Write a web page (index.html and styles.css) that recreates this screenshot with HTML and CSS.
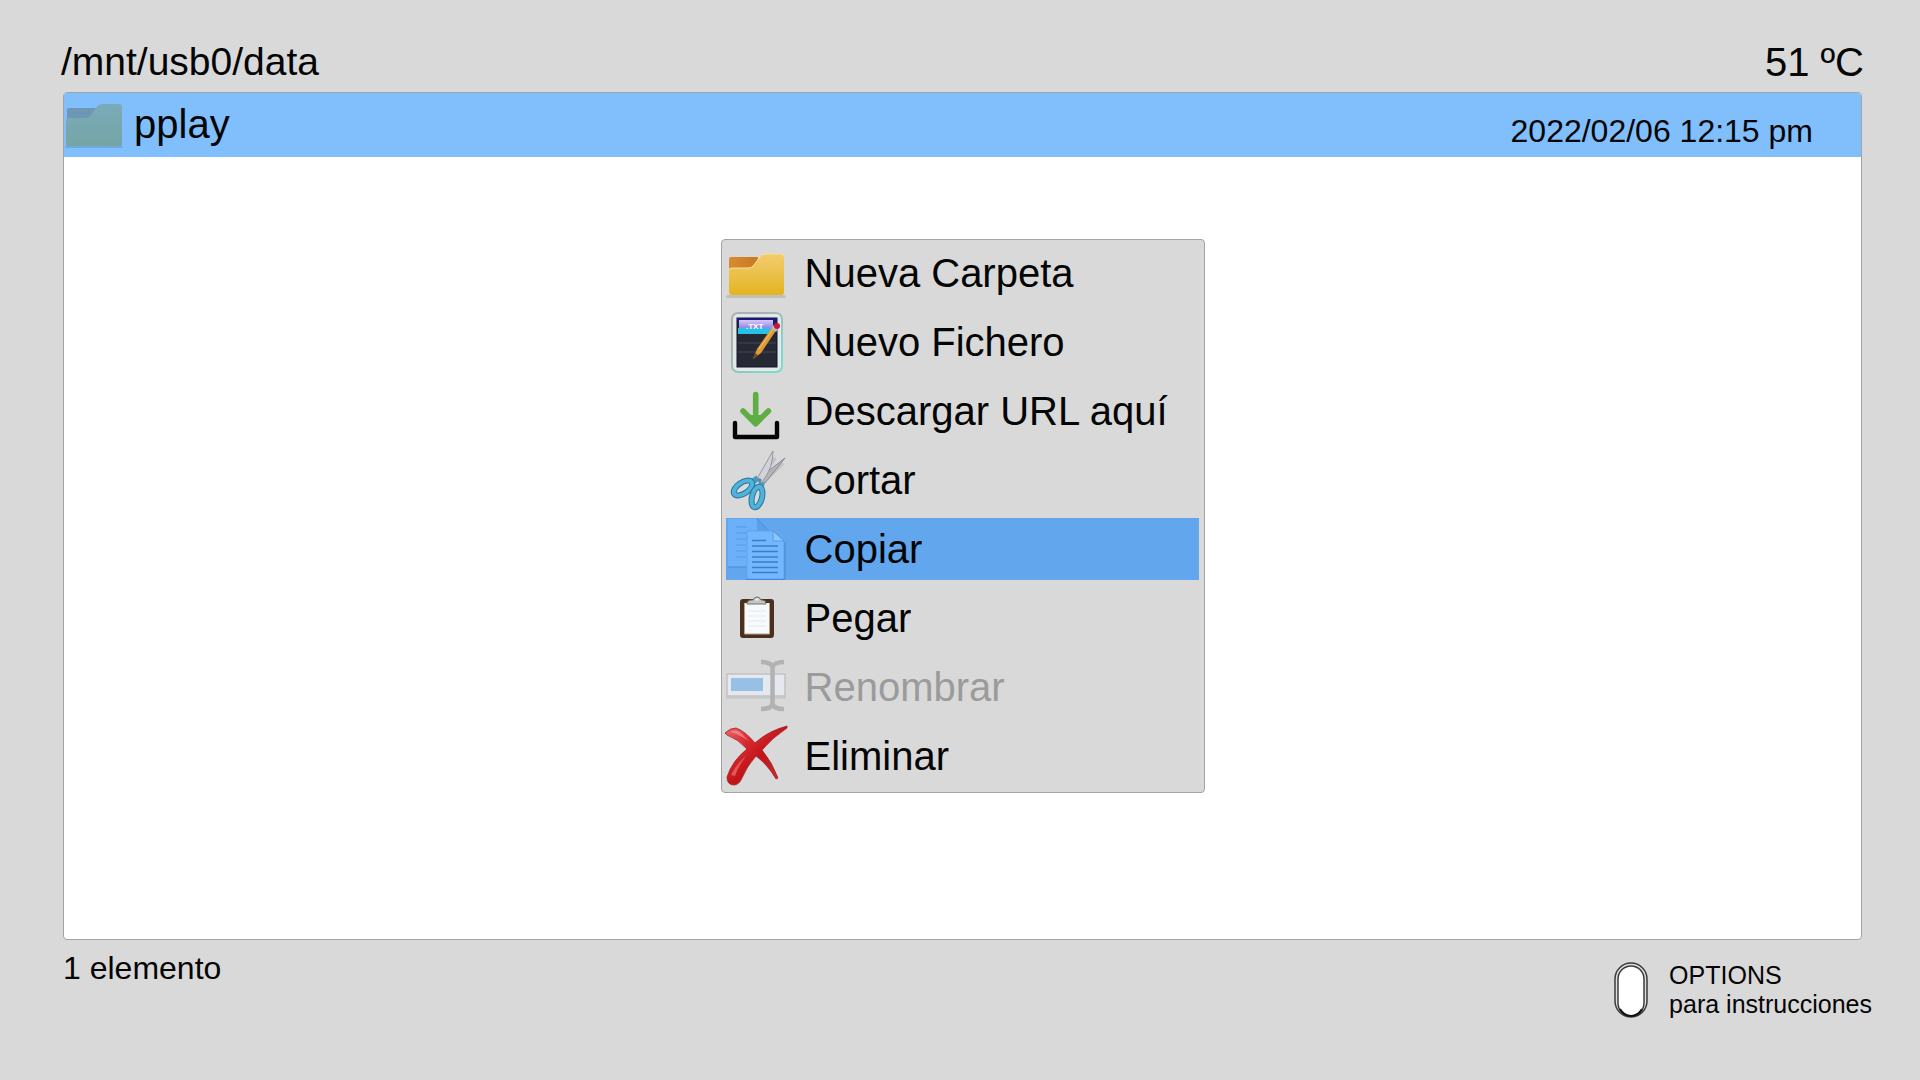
FILE: index.html
```
<!DOCTYPE html>
<html lang="es">
<head>
<meta charset="utf-8">
<title>/mnt/usb0/data</title>
<link rel="stylesheet" href="styles.css">
</head>
<body>
<header class="topbar">
  <h1 class="path">/mnt/usb0/data</h1>
  <span class="temp">51 ºC</span>
</header>

<main class="browser">
  <ul class="files">
    <li>
      <button type="button" class="file selected">
        <svg class="icon" viewBox="0 0 62 62" aria-hidden="true">
          <defs>
            <linearGradient id="dimFront" x1="0" y1="0" x2="0" y2="1"><stop offset="0" stop-color="#7aabb9"/><stop offset="1" stop-color="#75a5a5"/></linearGradient>
          </defs>
          <path d="M2 51h56l1 3H1z" fill="#70a9df"/>
          <path d="M3 16q0-2 2-2h27l-2 18H3z" fill="#6d97b5"/>
          <path d="M2 27q0-3 3-3h16q4 0 6-3l5-7q2-4 7-4h16q3 0 3 3v36q0 3-3 3H5q-3 0-3-3z" fill="url(#dimFront)"/>
        </svg>
        <span class="file-name">pplay</span>
        <span class="file-date">2022/02/06 12:15 pm</span>
      </button>
    </li>
  </ul>

  <nav class="menu" aria-label="Opciones">
    <button type="button" class="item">
      <svg class="icon" viewBox="0 0 62 62" aria-hidden="true">
        <defs>
          <linearGradient id="folderFront" x1="0" y1="0" x2="0" y2="1"><stop offset="0" stop-color="#f2cc6c"/><stop offset=".5" stop-color="#ebc04a"/><stop offset="1" stop-color="#e4b41f"/></linearGradient>
          <linearGradient id="folderBack" x1="0" y1="0" x2="1" y2="0"><stop offset="0" stop-color="#d98b34"/><stop offset="1" stop-color="#c87a20"/></linearGradient>
        </defs>
        <path d="M1 53h58l1 3H0z" fill="#c2c0bb"/>
        <path d="M3 17q0-2 2-2h27l-2 16H3z" fill="url(#folderBack)"/>
        <path d="M3 28q0-2 3-2h16q4 0 6-3l5-7q2-4 7-4h15q3 0 3 3v35q0 3-3 3H6q-3 0-3-3z" fill="url(#folderFront)"/>
        <path d="M3 28q0-2 3-2h16q4 0 6-3l5-7q2-4 7-4h15q3 0 3 3" fill="none" stroke="#f8df98"/>
      </svg>
      <span>Nueva Carpeta</span>
    </button>
    <button type="button" class="item">
      <svg class="icon" viewBox="0 0 62 62" aria-hidden="true">
        <defs>
          <linearGradient id="txtRim" x1="0" y1="0" x2="1" y2="1"><stop offset=".3" stop-color="#aab0b0"/><stop offset=".8" stop-color="#7fd8cc"/></linearGradient>
          <linearGradient id="txtHead" x1="0" y1="0" x2="0" y2="1"><stop offset="0" stop-color="#d5c8fa"/><stop offset="1" stop-color="#8d7ce4"/></linearGradient>
        </defs>
        <rect x="6" y="2" width="50" height="59" rx="6" fill="#e3e8e8" stroke="url(#txtRim)" stroke-width="2"/>
        <rect x="11" y="7" width="40" height="49" fill="#262933" stroke="#15152f"/>
        <rect x="11" y="7" width="40" height="4" fill="#1c177c"/>
        <rect x="13" y="9" width="34" height="9" fill="url(#txtHead)"/>
        <rect x="12" y="17" width="36" height="6" fill="#25c2e6"/>
        <path d="M12 32h38M12 41h38" stroke="#444956"/>
        <text x="20" y="18" class="txt-tag">.TXT</text>
        <path d="M27 48l4-10 16-23 4 3-16 24z" fill="#e09a35"/>
        <path d="M33 38L48 17" stroke="#f5c26a" stroke-width="1"/>
        <path d="M27 48l2-6 3 2z" fill="#6b4b25"/>
        <path d="M45 17l3-3 4 4-2 3z" fill="#b9b5c6"/>
        <circle cx="51" cy="15" r="3" fill="#cf1236"/>
      </svg>
      <span>Nuevo Fichero</span>
    </button>
    <button type="button" class="item">
      <svg class="icon" viewBox="0 0 62 62" aria-hidden="true">
        <path d="M9 43v14h42V43" fill="none" stroke="#050505" stroke-width="4.400" stroke-linejoin="round" stroke-linecap="round"/>
        <path d="M29.700 14.500V43M17 31l12.700 12.700L42.400 31" fill="none" stroke="#5fae43" stroke-width="5.600" stroke-linecap="round" stroke-linejoin="round"/>
        <path d="M22 35h15l-7 11z" fill="#5fae43"/>
      </svg>
      <span>Descargar URL aquí</span>
    </button>
    <button type="button" class="item">
      <svg class="icon" viewBox="0 0 62 62" aria-hidden="true">
        <path d="M36 34L57 14M33 31l16-22" stroke="#c4c4c4" stroke-width="4"/>
        <path d="M59 9L32 30l2 5 5-1z" fill="#b3b5bb" stroke="#777b84" stroke-width=".8"/>
        <path d="M47 2L32 28l3 6 4-5q8-12 8-27z" fill="#d2d3d8" stroke="#858891" stroke-width=".8"/>
        <path d="M32 29l-7 5M36 33l-2 8" stroke="#4a9cc4" stroke-width="6"/>
        <ellipse cx="17" cy="39" rx="10.500" ry="5.500" transform="rotate(-34 17 39)" fill="#d3dce0" stroke="#2c7398" stroke-width="6"/>
        <ellipse cx="17" cy="39" rx="10.500" ry="5.500" transform="rotate(-34 17 39)" fill="none" stroke="#4fb3dc" stroke-width="4"/>
        <ellipse cx="31" cy="48" rx="5" ry="10.500" transform="rotate(14 31 48)" fill="#d3dce0" stroke="#2c7398" stroke-width="6"/>
        <ellipse cx="31" cy="48" rx="5" ry="10.500" transform="rotate(14 31 48)" fill="none" stroke="#4fb3dc" stroke-width="4"/>
        <circle cx="34" cy="31" r="1.500" fill="#777"/>
      </svg>
      <span>Cortar</span>
    </button>
    <button type="button" class="item active">
      <svg class="icon" viewBox="0 0 62 62" aria-hidden="true">
        <path d="M2 1h29l11 12v36H2z" fill="#6bb0f8"/>
        <path d="M2 49h19M31 1l11 12" stroke="#4a8bd2" stroke-width="1.200"/>
        <path d="M31 1v12h11z" fill="#5b9fe8"/>
        <path d="M10 9h11M10 15h16M10 21h11M10 27h10M10 33h10M10 39h10" stroke="#579ae3" stroke-width="1.200"/>
        <path d="M21 13h26l11 10v38H21z" fill="#73b8ff" stroke="#5da3ef"/>
        <path d="M47 13v10h11z" fill="#8ac6ff" stroke="#4e92dc" stroke-width=".8"/>
        <path d="M26 22.500h14M26 28h26M26 33.500h26M26 39h26M26 44h26M26 49.500h26M26 54.500h26" stroke="#3c7dc8" stroke-width="1.500"/>
        <path d="M20 61.500h39V24" fill="none" stroke="#4488d2"/>
      </svg>
      <span>Copiar</span>
    </button>
    <button type="button" class="item">
      <svg class="icon" viewBox="0 0 62 62" aria-hidden="true">
        <rect x="16" y="14" width="30" height="35" rx="1" fill="#f9fafc" stroke="#4b3020" stroke-width="4"/>
        <path d="M18.500 16v31h25V16" fill="none" stroke="#b9a38f"/>
        <path d="M22 24h18M22 29h18M22 34h18M22 39h18" stroke="#e2e9f1"/>
        <path d="M21 17q0-4 5-4h1q1-3 4-3t4 3h1q4 0 4 4z" fill="#c3c6c3" stroke="#6e706b"/>
        <circle cx="31" cy="12.500" r="1.200" fill="#f3f3f3"/>
      </svg>
      <span>Pegar</span>
    </button>
    <button type="button" class="item" disabled>
      <svg class="icon" viewBox="0 0 62 62" aria-hidden="true">
        <rect x="0" y="38" width="60" height="5" fill="#cbcbcb"/>
        <rect x="1" y="18" width="58" height="22" fill="#e6e8f0" stroke="#c2c2c4" stroke-width="1.500"/>
        <rect x="5" y="22" width="32" height="13" fill="#98c0e4"/>
        <path d="M35 6q10 0 11.500 5Q48 6 58 6M46.500 10v39M35 53q10 0 11.500-5Q48 53 58 53" fill="none" stroke="#b2b2b2" stroke-width="4.500"/>
      </svg>
      <span>Renombrar</span>
    </button>
    <button type="button" class="item">
      <svg class="icon" viewBox="0 0 62 62" aria-hidden="true">
        <defs>
          <linearGradient id="crossRed" x1="0" y1="0" x2="1" y2="1"><stop offset="0" stop-color="#ee6a6e"/><stop offset=".3" stop-color="#d92a30"/><stop offset=".55" stop-color="#c01418"/><stop offset="1" stop-color="#c93a40"/></linearGradient>
        </defs>
        <path d="M-1 8Q4 3 10 3q9 3 19 15Q42 6 61 1v2Q46 13 36 25q10 12 16 28l-2 1Q42 40 30 31q-9 10-14 22-3 7-8 7-7 0-7-8 5-16 20-28Q12 14 1 10z" fill="url(#crossRed)" stroke="#9f2228" stroke-width=".8"/>
        <path d="M4 7q7-4 13 3l6 6Q12 9 4 7z" fill="#f6a0a2" opacity=".6"/>
        <path d="M5 50Q11 38 21 30 12 41 9 51z" fill="#f07076" opacity=".7"/>
      </svg>
      <span>Eliminar</span>
    </button>
  </nav>
</main>

<footer class="bottombar">
  <span class="count">1 elemento</span>
  <div class="hint">
    <svg class="pill" viewBox="0 0 34 56" aria-hidden="true">
      <rect x="1" y="1" width="32" height="54" rx="16" fill="#dedede" stroke="#3c3c3c" stroke-width="1.500"/>
      <rect x="4" y="4" width="26" height="50" rx="13" fill="#fff" stroke="#3c3c3c" stroke-width="1.500"/>
      <path d="M6 47q4 7 11 7t11-7" fill="none" stroke="#111" stroke-width="2"/>
    </svg>
    <p class="hint-text">OPTIONS<br>para instrucciones</p>
  </div>
</footer>
</body>
</html>
```
FILE: styles.css
```
* {
  box-sizing: border-box;
}

body {
  margin: 0;
  min-height: 100vh;
  display: flex;
  flex-direction: column;
  background: #d9d9d9;
  color: #050505;
  font-family: "Liberation Sans", Arial, sans-serif;
  font-size: 40px;
}

button {
  border: 0;
  margin: 0;
  background: none;
  color: inherit;
  font: inherit;
  text-align: left;
}

.topbar {
  display: flex;
  justify-content: space-between;
  padding: 40px 56px 8px 61px;
  line-height: 44px;
}

.path {
  margin: 0;
  font-size: 39px;
  font-weight: 400;
}

.browser {
  position: relative;
  flex: 1;
  margin: 0 58px 0 63px;
  border: 1px solid #a3a3a3;
  border-radius: 4px;
  background: #fff;
}

.files {
  margin: 0;
  padding: 0;
  list-style: none;
}

.file {
  display: flex;
  align-items: center;
  width: 100%;
  height: 64px;
  padding: 0 48px 0 0;
  border-radius: 3px 3px 0 0;
}

.file.selected {
  background: #80bffc;
}

.file-name {
  flex: 1;
  padding: 0 0 2px 8px;
}

.file-date {
  padding-top: 12px;
  font-size: 32px;
}

.icon {
  flex: none;
  width: 62px;
  height: 62px;
  overflow: visible;
}

.txt-tag {
  fill: #fff;
  font-size: 8px;
  font-weight: 700;
}

.menu {
  position: absolute;
  top: 50%;
  left: 50%;
  transform: translate(-50%, -50%);
  display: flex;
  flex-direction: column;
  gap: 7px;
  width: 484px;
  padding: 2px 5px 5px 4px;
  border: 1px solid #a3a3a3;
  border-radius: 4px;
  background: #d9d9d9;
}

.item {
  display: flex;
  align-items: center;
  gap: 17px;
  height: 62px;
  padding: 0;
  white-space: nowrap;
}

.item.active {
  background: #62a6ee;
}

.item:disabled {
  color: #9b9b9b;
}

.bottombar {
  display: flex;
  justify-content: space-between;
  align-items: flex-start;
  min-height: 140px;
  padding: 10px 48px 0 63px;
}

.count {
  font-size: 32px;
  line-height: 36px;
}

.hint {
  display: flex;
  align-items: center;
  gap: 21px;
  padding-top: 11px;
}

.pill {
  width: 34px;
  height: 56px;
}

.hint-text {
  margin: 0;
  font-size: 25px;
  line-height: 29px;
}
```
